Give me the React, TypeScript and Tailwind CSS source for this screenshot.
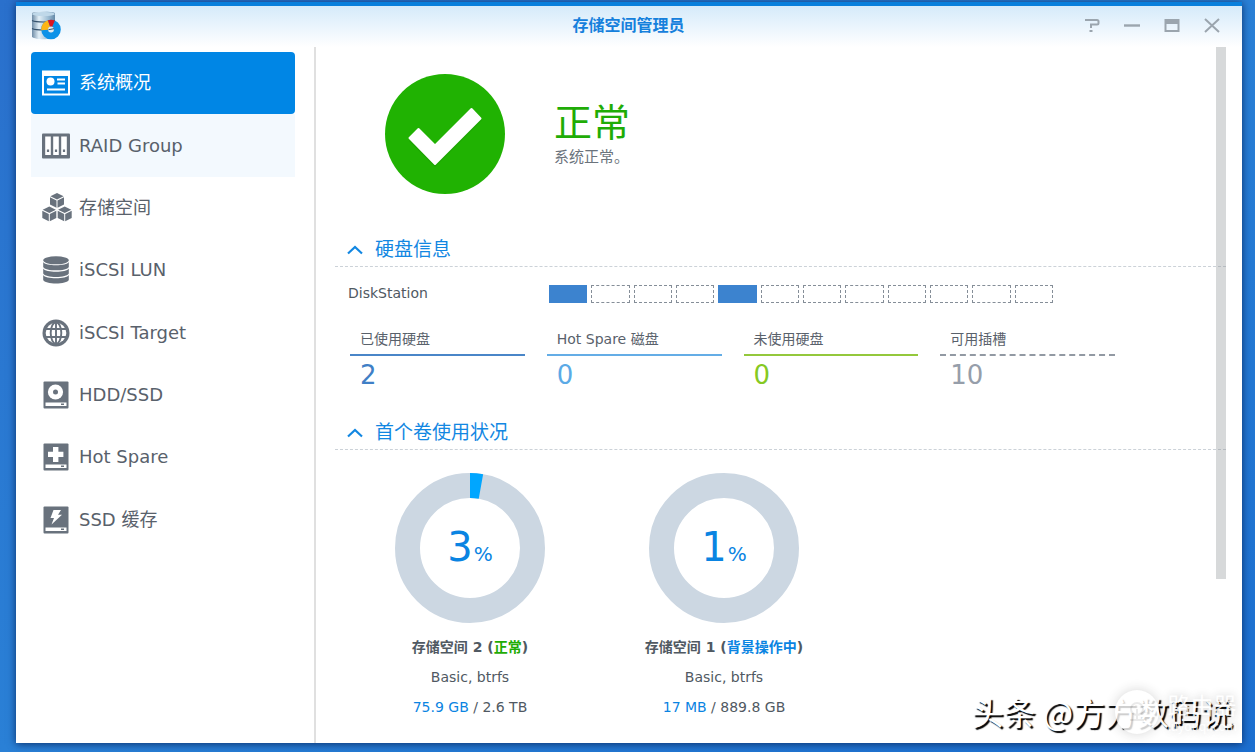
import React from "react";

const FONT = "font-['DejaVu_Sans','Noto_Sans_CJK_SC',sans-serif]";

function OverviewIcon() {
  return (
    <svg viewBox="0 0 28 28" className="size-7" aria-hidden="true">
      <path fill="currentColor" fillRule="evenodd" d="M0 1.500h28v25H0zM2 7v17.500h24V7z" />
      <circle cx="8.500" cy="12.500" r="4" fill="currentColor" />
      <path stroke="currentColor" strokeWidth="2" d="M15 10.500h8M15.500 14.500h7.500M5 20.500h18" />
    </svg>
  );
}

function RaidIcon() {
  return (
    <svg viewBox="0 0 28 28" className="size-7" aria-hidden="true">
      <rect y="1.500" width="28" height="25" rx="1" fill="currentColor" />
      {[3.2, 11.2, 19.2].map((x) => (
        <g key={x}>
          <rect x={x} y="4.500" width="5.600" height="18.500" fill="#fff" />
          <rect x={x + 1.7} y="17.500" width="2.200" height="2.500" fill="currentColor" />
        </g>
      ))}
    </svg>
  );
}

function Cube({ x, y }: { x: number; y: number }) {
  return (
    <g transform={`translate(${x} ${y})`}>
      <path fill="currentColor" d="M7 0l6.600 3.200L7 6.500.4 3.200z" />
      <path fill="currentColor" d="M0 4.200l6.500 3.200v7.400L0 11.600zM14 4.200L7.500 7.400v7.400l6.500-3.200z" />
    </g>
  );
}

function VolumeIcon() {
  return (
    <svg viewBox="0 0 30 29" className="h-[29px] w-[30px]" aria-hidden="true">
      <Cube x={8} y={0} />
      <Cube x={0.3} y={13.5} />
      <Cube x={15.7} y={13.5} />
    </svg>
  );
}

function LunIcon() {
  return (
    <svg viewBox="0 0 28 28" className="size-7" aria-hidden="true" fill="currentColor">
      <ellipse cx="14" cy="4.300" rx="12.800" ry="4" />
      {[0, 6.6, 13.2].map((y) => (
        <path key={y} transform={`translate(0 ${y})`} d="M1.200 5.900c2 4.300 23.600 4.300 25.600 0v5c-1.500 4.600-24.100 4.600-25.600 0z" />
      ))}
    </svg>
  );
}

function TargetIcon() {
  return (
    <svg viewBox="0 0 28 28" className="size-7" aria-hidden="true">
      <circle cx="14" cy="14" r="13.500" fill="currentColor" />
      <circle cx="14" cy="14" r="10.300" fill="#fff" />
      <g fill="none" stroke="currentColor" strokeWidth="1.900">
        <path d="M14 3v22M3 10h22M3 18h22" />
        <ellipse cx="14" cy="14" rx="5.300" ry="10.800" />
      </g>
    </svg>
  );
}

function DriveIcon({ children }: { children: React.ReactNode }) {
  return (
    <svg viewBox="0 0 28 28" className="size-7" aria-hidden="true">
      <rect x="1.500" y="0.500" width="25" height="27" rx="1" fill="currentColor" />
      <rect x="3.500" y="21.500" width="21" height="3.500" fill="#fff" />
      <rect x="19" y="22.500" width="3" height="1.500" fill="currentColor" />
      {children}
    </svg>
  );
}

const navItems = [
  { label: "系统概况", icon: <OverviewIcon /> },
  { label: "RAID Group", icon: <RaidIcon /> },
  { label: "存储空间", icon: <VolumeIcon /> },
  { label: "iSCSI LUN", icon: <LunIcon /> },
  { label: "iSCSI Target", icon: <TargetIcon /> },
  {
    label: "HDD/SSD",
    icon: (
      <DriveIcon>
        <circle cx="13.500" cy="11" r="7.600" fill="#fff" />
        <circle cx="13.500" cy="11" r="2.500" fill="currentColor" />
      </DriveIcon>
    ),
  },
  {
    label: "Hot Spare",
    icon: (
      <DriveIcon>
        <path fill="#fff" d="M11 4h5.400v4.800h5v5.200h-5v5H11v-5H6V8.800h5z" />
      </DriveIcon>
    ),
  },
  {
    label: "SSD 缓存",
    icon: (
      <DriveIcon>
        <path fill="#fff" d="M11.500 4H19l-3 4.700h4L9.500 18.500l2.500-6.500H8.500z" />
      </DriveIcon>
    ),
  },
];

function Sidebar() {
  return (
    <nav className="w-[300px] shrink-0 border-r-2 border-[#e0e0e0] pt-[5px] pr-[19px] pl-[15px]">
      <ul className="flex h-[499px] flex-col">
        {navItems.map((item, i) => (
          <li key={item.label} className="flex-1">
            <button
              type="button"
              aria-current={i === 0 ? "page" : undefined}
              className={`flex h-full w-full items-center pl-[11px] text-left text-lg ${
                i === 0
                  ? "rounded bg-[#0086e5] text-white"
                  : i === 1
                    ? "bg-[#f3f9fe] text-[#69727d]"
                    : "text-[#69727d]"
              }`}
            >
              <span className="w-[37px] shrink-0">{item.icon}</span>
              <span className={i === 0 ? "" : "text-[#59616b]"}>{item.label}</span>
            </button>
          </li>
        ))}
      </ul>
    </nav>
  );
}

function AppLogo() {
  return (
    <svg viewBox="0 0 30 30" className="size-[30px]" aria-hidden="true">
      <defs>
        <linearGradient id="cyl" x1="0" x2="1" y1="0" y2="0">
          <stop offset="0" stopColor="#6f8ca6" />
          <stop offset="0.300" stopColor="#e2eff7" />
          <stop offset="0.700" stopColor="#9dbdd4" />
          <stop offset="1" stopColor="#6488a7" />
        </linearGradient>
      </defs>
      <path fill="url(#cyl)" d="M1 2c4-2 19-2 23 0v24c-4 3-19 3-23 0z" />
      <ellipse cx="12.500" cy="3" rx="11.500" ry="2" fill="#bfd8e9" />
      <path fill="none" stroke="#36526d" strokeWidth="1.200" d="M1 9.500c4 2 19 2 23 0M1 17.500c4 2 19 2 23 0" />
      <circle cx="20" cy="18.500" r="6.300" fill="none" stroke="#0d92e8" strokeWidth="7" />
      <path fill="none" stroke="#fdb515" strokeWidth="7" d="M13.700 19A6.300 6.300 0 0 1 18 12.500" />
      <path fill="none" stroke="#dc1622" strokeWidth="7" d="M18 12.500A6.300 6.300 0 0 1 22.500 12.700" />
      <circle cx="20" cy="18.500" r="2.900" fill="#dfeaf1" />
      <path fill="none" stroke="#36526d" strokeWidth="1" d="M17.500 18.700l5.500-1" />
    </svg>
  );
}

function TitleBar() {
  const button = "flex size-5 items-center justify-center";
  return (
    <header className="flex h-[41px] items-center bg-linear-to-b from-[#d5eafa] to-white pr-5 pb-px pl-[15px]">
      <div className="flex-1">
        <AppLogo />
      </div>
      <h1 className="pl-1 text-base font-bold text-[#1580dc]">存储空间管理员</h1>
      <div className="flex flex-1 justify-end gap-5 text-[#9ba5ae]">
        <button type="button" aria-label="帮助" className={button}>
          <svg viewBox="0 0 16 16" className="size-4" fill="none" stroke="currentColor" strokeWidth="2">
            <path d="M1 2h12q1.500 0 1.500 1.500V5q0 1.500-1.500 1.500H7V10M5.500 13h3" />
          </svg>
        </button>
        <button type="button" aria-label="最小化" className={button}>
          <svg viewBox="0 0 16 16" className="size-4" stroke="currentColor" strokeWidth="2.400">
            <path d="M0 7.500h16" />
          </svg>
        </button>
        <button type="button" aria-label="最大化" className={button}>
          <svg viewBox="0 0 16 16" className="size-4">
            <path fill="currentColor" fillRule="evenodd" d="M0.500 1h15v13h-15zM2.500 6v6h11V6z" />
          </svg>
        </button>
        <button type="button" aria-label="关闭" className={button}>
          <svg viewBox="0 0 16 16" className="size-4" stroke="currentColor" strokeWidth="2">
            <path d="M1 1l14 13M15 1l-14 13" />
          </svg>
        </button>
      </div>
    </header>
  );
}

function SectionHeader({ title }: { title: string }) {
  return (
    <h2>
      <button
        type="button"
        aria-expanded="true"
        className="flex h-[34px] w-full items-center gap-3 border-b border-dashed border-[#ccd2d8] pl-3 text-left text-[19px] text-[#1287e2]"
      >
        <svg viewBox="0 0 16 10" className="h-[10px] w-4" fill="none" stroke="currentColor" strokeWidth="2.200" aria-hidden="true">
          <path d="M1 8.500l7-6.500 7 6.500" />
        </svg>
        {title}
      </button>
    </h2>
  );
}

const slots = [true, false, false, false, true, false, false, false, false, false, false, false];

const stats = [
  { label: "已使用硬盘", value: "2", tone: "border-[#4a86c8] text-[#3f7fc6]" },
  { label: "Hot Spare 磁盘", value: "0", tone: "border-[#64ade6] text-[#5baae6]" },
  { label: "未使用硬盘", value: "0", tone: "border-[#94c83c] text-[#86c922]" },
  { label: "可用插槽", value: "10", tone: "border-dashed border-[#9299a3] text-[#969eaa]" },
];

const volumes = [
  { name: "存储空间 2", status: "正常", tone: "text-[#1fac06]", percent: 3, used: "75.9 GB", total: "2.6 TB" },
  { name: "存储空间 1", status: "背景操作中", tone: "text-[#0a84e2]", percent: 1, used: "17 MB", total: "889.8 GB" },
];

function Donut({ percent }: { percent: number }) {
  const length = 2 * Math.PI * 62.5;
  return (
    <div className="grid place-items-center">
      <svg viewBox="0 0 150 150" className="col-start-1 row-start-1 size-[150px]" fill="none" strokeWidth="25" aria-hidden="true">
        <circle cx="75" cy="75" r="62.500" stroke="#ccd7e2" />
        {percent > 1 && (
          <circle
            cx="75"
            cy="75"
            r="62.500"
            stroke="#00a6ff"
            transform="rotate(-90 75 75)"
            strokeDasharray={`${length * 0.028} ${length}`}
          />
        )}
      </svg>
      <p className="col-start-1 row-start-1 flex items-baseline gap-px pb-[2px] text-[40px] leading-none text-[#0a84e2]">
        {percent}
        <span className="text-xl leading-none">%</span>
      </p>
    </div>
  );
}

function Overview() {
  return (
    <main className="relative min-w-0 flex-1 pr-4 pl-[19px]">
      <section className="flex items-center gap-[49px] pt-[27px] pl-[50px]">
        <svg viewBox="0 0 120 120" className="size-[120px] shrink-0" aria-hidden="true">
          <circle cx="60" cy="60" r="60" fill="#20b202" />
          <path
            transform="translate(0 2)"
            fill="#138a00"
            opacity="0.350"
            d="M24 65l10-9 16 15L87 33l10 11-47 47z"
          />
          <path
            fill="#fff"
            stroke="#fff"
            strokeWidth="2"
            strokeLinejoin="round"
            d="M24.500 64l9-9L50 71.500 86.500 35l9 9.500L50 90z"
          />
        </svg>
        <div className="pt-1">
          <p className="text-[38px] leading-10 text-[#1fac06]">正常</p>
          <p className="pt-[2px] text-[15px] leading-6 text-[#6b737c]">系统正常。</p>
        </div>
      </section>

      <section className="pt-[39px]">
        <SectionHeader title="硬盘信息" />
        <div className="flex items-start pt-[14px] pl-[13px] text-sm leading-6 text-[#505962]">
          <span className="w-[201px] shrink-0">DiskStation</span>
          <div className="pt-1 pb-[3px]">
            <div className="grid h-[18px] w-[504px] grid-cols-12 gap-1">
              {slots.map((used, i) => (
                <span
                  key={i}
                  className={used ? "bg-[#3c83cf]" : "border border-dashed border-[#858e98]"}
                />
              ))}
            </div>
          </div>
        </div>
        <dl className="grid max-w-[780px] grid-cols-4 gap-[22px] pt-[21px] pl-[15px]">
          {stats.map((s) => (
            <div key={s.label}>
              <dt className={`border-b-2 pb-[3px] pl-[10px] ${s.tone}`}>
                <span className="block text-sm leading-6 text-[#59616b]">{s.label}</span>
              </dt>
              <dd className={`pt-[3px] pl-[10px] text-[26px] leading-8 ${s.tone}`}>{s.value}</dd>
            </div>
          ))}
        </dl>
      </section>

      <section className="pt-[25px]">
        <SectionHeader title="首个卷使用状况" />
        <div className="flex pt-[23px] pl-2">
          {volumes.map((v) => (
            <article key={v.name} className="flex w-[254px] flex-col items-center text-sm leading-[30px] text-[#505962]">
              <Donut percent={v.percent} />
              <h3 className="mt-[9px] font-bold">
                {v.name} (<span className={v.tone}>{v.status}</span>)
              </h3>
              <p>Basic, btrfs</p>
              <p>
                <span className="text-[#0a84e2]">{v.used}</span> / {v.total}
              </p>
            </article>
          ))}
        </div>
      </section>

      <div className="absolute top-0 right-4 h-[532px] w-[10px] bg-[#8c9196]/35" />
    </main>
  );
}

function Watermark() {
  return (
    <div className="pointer-events-none absolute right-[9px] bottom-[9px] font-['Noto_Sans_CJK_SC',sans-serif] text-white">
      <p className="text-[32px] leading-[46px] whitespace-nowrap [text-shadow:2px_2px_1px_#000]">头条 @方方数码说</p>
      <div className="absolute -right-1 bottom-0 flex items-center gap-2 opacity-80">
        <span className="flex size-11 items-center justify-center rounded-full bg-white shadow-[0_0_12px_#0003]">
          <svg viewBox="0 0 24 24" className="size-6" fill="none" stroke="#e6e6e6" strokeWidth="2" aria-hidden="true">
            <circle cx="12" cy="9" r="6" />
            <path d="M5 20h14M12 9v11" />
          </svg>
        </span>
        <span className="flex flex-col [text-shadow:0_0_8px_#0004]">
          <span className="text-[23px] leading-7">路由器</span>
          <span className="text-[12px] leading-4">luyouqi.com</span>
        </span>
      </div>
    </div>
  );
}

export default function App() {
  return (
    <div
      className={`flex min-h-screen bg-linear-to-br from-[#2a70cc] via-[#2a80d6] to-[#1c6fd0] pt-[2px] pr-[13px] pb-[9px] pl-4 ${FONT}`}
    >
      <div className="relative flex flex-1 flex-col border-t-4 border-[#087fdc] bg-white shadow-[0_1px_8px_#0a2f6a]">
        <TitleBar />
        <div className="flex flex-1">
          <Sidebar />
          <Overview />
        </div>
        <Watermark />
      </div>
    </div>
  );
}
